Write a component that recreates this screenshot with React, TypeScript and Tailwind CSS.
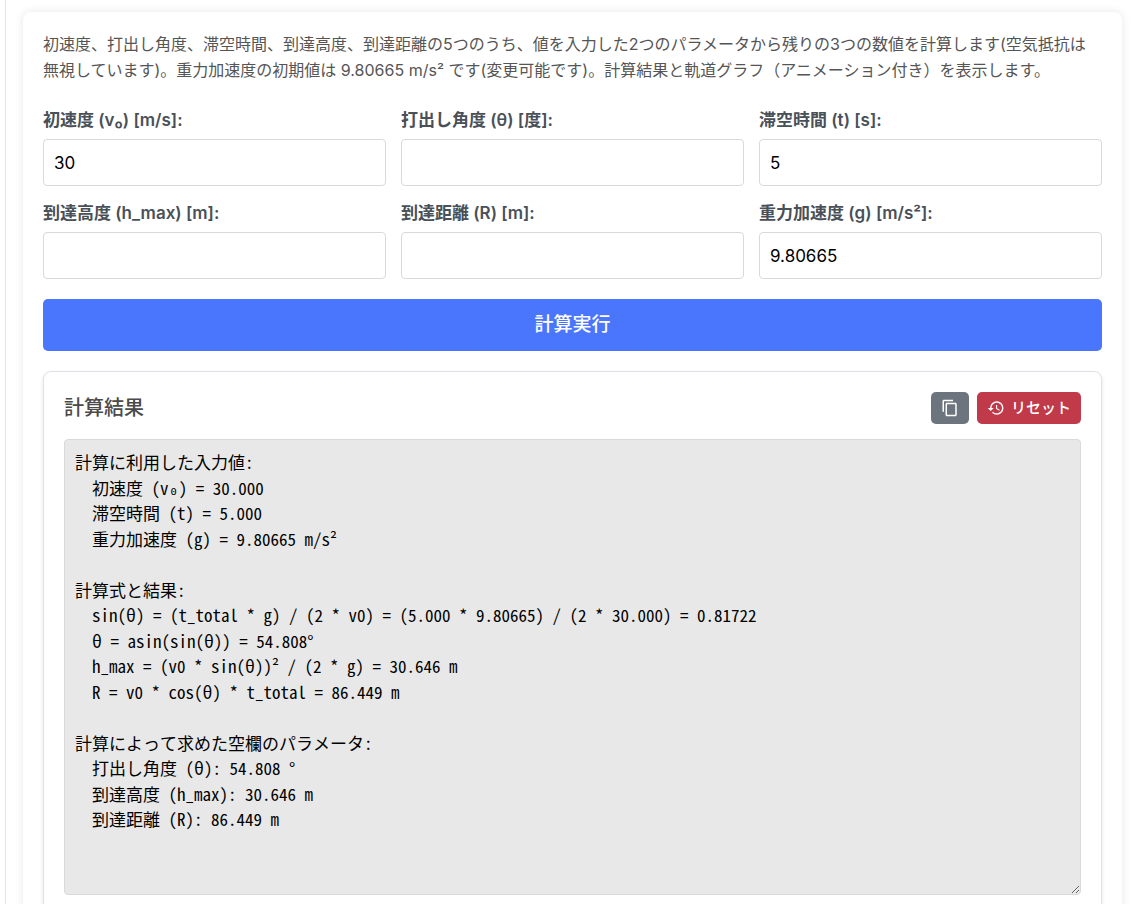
import { useState } from "react";
import { MdContentCopy, MdHistory } from "react-icons/md";

const fields = [
  { id: "v0", label: "初速度 (v₀) [m/s]:", value: "30" },
  { id: "theta", label: "打出し角度 (θ) [度]:", value: "" },
  { id: "time", label: "滞空時間 (t) [s]:", value: "5" },
  { id: "height", label: "到達高度 (h_max) [m]:", value: "" },
  { id: "range", label: "到達距離 (R) [m]:", value: "" },
  { id: "gravity", label: "重力加速度 (g) [m/s²]:", value: "9.80665" },
];

const report = `計算に利用した入力値:
  初速度 (v₀) = 30.000
  滞空時間 (t) = 5.000
  重力加速度 (g) = 9.80665 m/s²

計算式と結果:
  sin(θ) = (t_total * g) / (2 * v0) = (5.000 * 9.80665) / (2 * 30.000) = 0.81722
  θ = asin(sin(θ)) = 54.808°
  h_max = (v0 * sin(θ))² / (2 * g) = 30.646 m
  R = v0 * cos(θ) * t_total = 86.449 m

計算によって求めた空欄のパラメータ:
  打出し角度 (θ): 54.808 °
  到達高度 (h_max): 30.646 m
  到達距離 (R): 86.449 m
`;

function Field({ id, label, initial }: { id: string; label: string; initial: string }) {
  const [value, setValue] = useState(initial);
  return (
    <div className="flex min-w-0 flex-col gap-1.5">
      <label htmlFor={id} className="text-[17px] leading-[26px] font-semibold text-[#495057]">
        {label}
      </label>
      <input
        id={id}
        type="text"
        inputMode="decimal"
        value={value}
        onChange={(e) => setValue(e.target.value)}
        className="h-[47px] w-full rounded border border-[#d9d9d9] bg-white px-2.5 text-[17px] text-black"
      />
    </div>
  );
}

export default function App() {
  return (
    <div lang="ja" className="min-h-screen bg-white font-['Inter','Noto_Sans_CJK_JP',sans-serif] text-[#555]">
      <div className="ml-[5px] min-h-screen border-l border-[#e3e3e3] pt-3 pr-[14px] pl-[17px]">
        <main className="rounded-lg bg-white px-5 pt-[19px] pb-5 shadow-[0_0_10px_rgba(0,0,0,0.1)]">
          <p className="pr-3 text-[16px] leading-[26px]">
            初速度、打出し角度、滞空時間、到達高度、到達距離の5つのうち、値を入力した2つのパラメータから残りの3つの数値を計算します(空気抵抗は無視しています)。重力加速度の初期値は 9.80665 m/s² です(変更可能です)。計算結果と軌道グラフ（アニメーション付き）を表示します。
          </p>
          <form className="mt-6" onSubmit={(e) => e.preventDefault()}>
            <div className="grid grid-cols-3 gap-x-[15px] gap-y-3.5">
              {fields.map((f) => (
                <Field key={f.id} id={f.id} label={f.label} initial={f.value} />
              ))}
            </div>
            <button type="submit" className="mt-5 h-[52px] w-full rounded-[5px] bg-[#4a76fd] text-[19px] font-medium text-white">
              計算実行
            </button>
          </form>
          <section className="mt-5 rounded-lg border border-[#dee2e6] bg-white p-5 shadow-[0_2px_4px_rgba(0,0,0,0.1)]">
            <div className="mb-[15px] flex items-center justify-between">
              <h2 className="text-[20px] leading-8 font-medium text-[#4a4a4a]">計算結果</h2>
              <div className="flex gap-2">
                <button type="button" aria-label="コピー" className="flex h-8 w-[38px] items-center justify-center rounded-[5px] bg-[#6c757d] text-white">
                  <MdContentCopy size={18} />
                </button>
                <button type="button" className="flex h-8 items-center gap-1.5 rounded-[5px] bg-[#c03a49] px-2.5 text-[15px] font-medium text-white">
                  <MdHistory size={18} />
                  リセット
                </button>
              </div>
            </div>
            <textarea
              aria-label="計算結果"
              readOnly
              value={report}
              className="block h-[456px] w-full resize-y rounded border border-[#d9d9d9] bg-[#e8e8e8] px-2.5 py-[9px] font-['Noto_Sans_Mono_CJK_JP','Noto_Sans_CJK_JP',monospace] text-[17px] leading-normal text-black"
            />
          </section>
        </main>
      </div>
    </div>
  );
}
